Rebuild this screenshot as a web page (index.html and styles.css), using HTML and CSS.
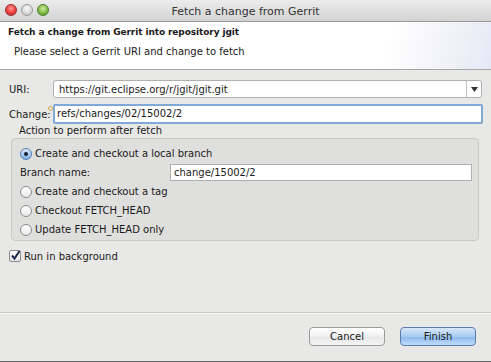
FILE: index.html
```html
<!DOCTYPE html>
<html>
<head>
<meta charset="utf-8">
<link rel="stylesheet" href="styles.css">
</head>
<body>
<div class="window">
  <div class="titlebar">
    <div class="lights">
      <span class="light red"></span>
      <span class="light gray"></span>
      <span class="light green"></span>
    </div>
    <div class="title">Fetch a change from Gerrit</div>
  </div>
  <div class="header">
    <div class="h-title">Fetch a change from Gerrit into repository jgit</div>
    <div class="h-desc">Please select a Gerrit URI and change to fetch</div>
  </div>
  <div class="body">
    <div class="row">
      <label class="lbl">URI:</label>
      <div class="combo"><span class="combo-text">https://git.eclipse.org/r/jgit/jgit.git</span><span class="combo-btn"><svg width="7" height="5" viewBox="0 0 7 5"><path d="M0 0H7L3.5 5Z" fill="#333"/></svg></span></div>
    </div>
    <div class="row last">
      <label class="lbl">Change:<span class="deco"></span></label>
      <div class="field focus">refs/changes/02/15002/2</div>
    </div>
    <div class="group-label">Action to perform after fetch</div>
    <div class="group">
      <div class="opt"><span class="radio on"></span>Create and checkout a local branch</div>
      <div class="branch-row"><span class="blabel">Branch name:</span><div class="field small">change/15002/2</div></div>
      <div class="opt"><span class="radio"></span>Create and checkout a tag</div>
      <div class="opt"><span class="radio"></span>Checkout FETCH_HEAD</div>
      <div class="opt"><span class="radio"></span>Update FETCH_HEAD only</div>
    </div>
    <div class="check-row"><span class="check"><svg width="11" height="11" viewBox="0 0 11 11"><path d="M2 5.5L4.5 8.5L9.5 1" stroke="#1a2a4a" stroke-width="2" fill="none"/></svg></span>Run in background</div>
  </div>
  <div class="footer">
    <button class="btn">Cancel</button>
    <button class="btn default">Finish</button>
  </div>
</div>
</body>
</html>
```
FILE: styles.css
```css
html, body { margin: 0; padding: 0; }
body {
  width: 491px; height: 362px; overflow: hidden;
  font-family: "DejaVu Sans", sans-serif;
  font-size: 10px;
  color: #1a1a1a;
  background: #e8e8e6;
}
.window {
  width: 491px; height: 362px;
  display: flex; flex-direction: column;
  background: #e8e8e6;
  border-bottom: 1px solid #6a6a6a;
  box-sizing: border-box;
}
.titlebar {
  height: 22px;
  position: relative;
  background: linear-gradient(#ececec, #d3d3d3);
  border-bottom: 1px solid #9a9a9a;
  box-sizing: border-box;
  display: flex; align-items: center; justify-content: center;
}
.lights { position: absolute; left: 5px; top: 4px; display: flex; gap: 4px; }
.light { width: 12px; height: 12px; border-radius: 50%; box-sizing: border-box; }
.red { background: radial-gradient(circle at 50% 35%, #f99 0%, #e44 50%, #b22 100%); border: 1px solid #9a3030; }
.gray { background: radial-gradient(circle at 50% 35%, #fafafa 0%, #d6d6d6 60%, #b8b8b8 100%); border: 1px solid #9c9c9c; }
.green { background: radial-gradient(circle at 50% 35%, #cfe8a0 0%, #86c24c 50%, #4a8a20 100%); border: 1px solid #4f7f30; }
.title { font-size: 11px; color: #333; padding-top: 1px; }
.header {
  height: 48px;
  background: linear-gradient(105deg, #ffffff 0%, #ffffff 78%, #f2f3f8 90%, #e6e9f5 100%);
  border-bottom: 1px solid #a8a8a8;
  box-sizing: border-box;
  padding: 3px 8px 0;
}
.h-title { font-weight: bold; font-size: 9px; letter-spacing: -0.1px; line-height: 15px; }
.h-desc { padding-left: 6px; margin-top: 4px; line-height: 15px; }
.body { padding: 10px 9px 0 9px; flex: 1; }
.row { display: flex; align-items: center; margin-bottom: 6px; }
.row.last { margin-bottom: 0; }
.lbl { width: 44px; position: relative; }
.deco { position: absolute; right: 0; top: -3px; width: 3px; height: 3px; border: 1px solid #d4a040; border-radius: 50%; }
.combo {
  flex: 1; height: 18px; box-sizing: border-box;
  border: 1px solid #b0b0b0; border-radius: 3px; background: #fff;
  display: flex; align-items: center;
}
.combo-text { flex: 1; padding-left: 5px; }
.combo-btn { width: 14px; height: 16px; border-left: 1px solid #c0c0c0; display: flex; align-items: center; justify-content: center; }
.field {
  flex: 1; height: 18px; box-sizing: border-box; background: #fff;
  border: 1px solid #b0b0b0; padding-left: 3px; line-height: 16px;
}
.field.focus { border: 2px solid #80a8d8; border-radius: 2px; padding-left: 2px; line-height: 15px; height: 20px; margin-right: -1px; }
.group-label { margin: 0 0 0 10px; line-height: 14px; }
.group {
  margin: 0 3px 0 2px;
  background: #dfdfdd;
  border: 1px solid #cacac8;
  border-radius: 4px;
  padding: 5px 6px 1px 8px;
}
.opt { display: flex; align-items: center; height: 19px; }
.radio {
  width: 12px; height: 12px; box-sizing: border-box; border-radius: 50%;
  border: 1px solid #8c8c8c; background: linear-gradient(#fff, #e8e8e8);
  margin-right: 3px; position: relative;
}
.radio.on { background: linear-gradient(#d8e8fa, #7eb0e8); border-color: #5a7fb0; }
.radio.on::after { content: ""; position: absolute; left: 3px; top: 3px; width: 4px; height: 4px; border-radius: 50%; background: #1a2230; }
.branch-row { display: flex; align-items: center; height: 19px; }
.blabel { width: 150px; }
.field.small { height: 17px; line-height: 15px; margin-right: 0; }
.check-row { display: flex; align-items: center; margin-top: 7px; height: 16px; }
.check {
  width: 12px; height: 12px; box-sizing: border-box; border: 1px solid #8c8c8c;
  border-radius: 2px; background: linear-gradient(#fff, #e4e4e4); margin-right: 3px; position: relative;
}
.check svg { position: absolute; left: 0; top: -1px; }
.footer {
  height: 49px; box-sizing: border-box;
  border-top: 1px solid #c8c8c6;
  box-shadow: inset 0 1px 0 #fafafa;
  display: flex; justify-content: flex-end; align-items: center;
  padding: 0 15px 2px 0; gap: 15px;
}
.btn {
  width: 76px; height: 19px; font-family: inherit; font-size: 10px; color: #1a1a1a;
  border: 1px solid #9a9a9a; border-radius: 4px;
  background: linear-gradient(#ffffff, #f0f0f0 50%, #e6e6e6 51%, #f4f4f4);
  padding: 0;
}
.btn.default {
  border-color: #5a7ab0;
  background: linear-gradient(#d8e8fb, #a8cbf2 50%, #8ab8ee 51%, #c0dcfa);
}
```
